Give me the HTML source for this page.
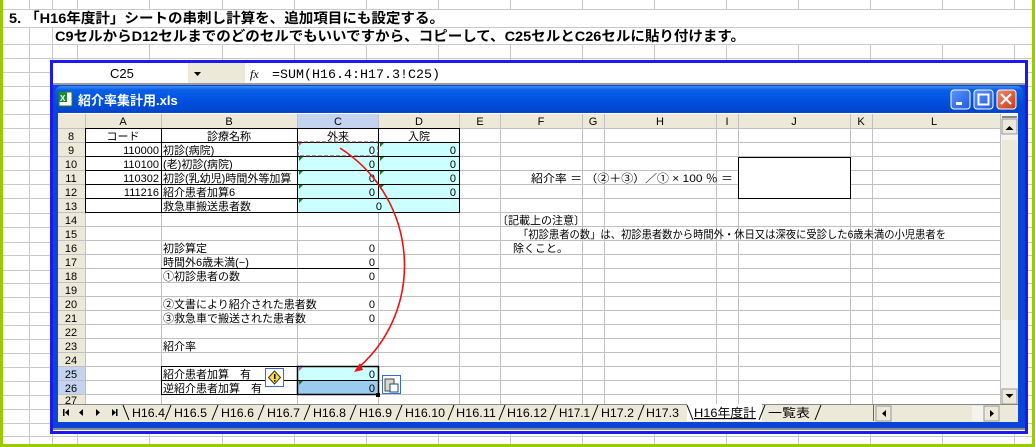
<!DOCTYPE html>
<html><head><meta charset="utf-8"><style>
html,body{margin:0;padding:0;background:#fff;}
svg{display:block;font-family:"Liberation Sans","Noto Sans CJK JP",sans-serif;}
</style></head><body>
<svg width="1035" height="447" viewBox="0 0 1035 447" xmlns="http://www.w3.org/2000/svg">
<rect width="1035" height="447" fill="#fff"/>
<g stroke="#c8c8c8" stroke-width="1">
<line x1="29.5" y1="0" x2="29.5" y2="447"/><line x1="52.5" y1="0" x2="52.5" y2="447"/><line x1="77.5" y1="0" x2="77.5" y2="447"/>
<line x1="149.5" y1="0" x2="149.5" y2="447"/><line x1="222.5" y1="0" x2="222.5" y2="447"/><line x1="294.5" y1="0" x2="294.5" y2="447"/>
<line x1="366.5" y1="0" x2="366.5" y2="447"/><line x1="438.5" y1="0" x2="438.5" y2="447"/><line x1="510.5" y1="0" x2="510.5" y2="447"/>
<line x1="582.5" y1="0" x2="582.5" y2="447"/><line x1="654.5" y1="0" x2="654.5" y2="447"/><line x1="726.5" y1="0" x2="726.5" y2="447"/>
<line x1="798.5" y1="0" x2="798.5" y2="447"/><line x1="870.5" y1="0" x2="870.5" y2="447"/><line x1="942.5" y1="0" x2="942.5" y2="447"/><line x1="1014.5" y1="0" x2="1014.5" y2="447"/>
<line x1="0" y1="9.5" x2="1035" y2="9.5"/><line x1="0" y1="27.5" x2="1035" y2="27.5"/><line x1="0" y1="44.5" x2="1035" y2="44.5"/>
<line x1="0" y1="58.5" x2="1035" y2="58.5"/><line x1="0" y1="72.5" x2="1035" y2="72.5"/><line x1="0" y1="86.5" x2="1035" y2="86.5"/>
<line x1="0" y1="100.5" x2="1035" y2="100.5"/><line x1="0" y1="114.5" x2="1035" y2="114.5"/><line x1="0" y1="128.5" x2="1035" y2="128.5"/>
<line x1="0" y1="142.5" x2="1035" y2="142.5"/><line x1="0" y1="156.5" x2="1035" y2="156.5"/><line x1="0" y1="170.5" x2="1035" y2="170.5"/>
<line x1="0" y1="184.5" x2="1035" y2="184.5"/><line x1="0" y1="198.5" x2="1035" y2="198.5"/><line x1="0" y1="213.5" x2="1035" y2="213.5"/>
<line x1="0" y1="227.5" x2="1035" y2="227.5"/><line x1="0" y1="242.5" x2="1035" y2="242.5"/><line x1="0" y1="255.5" x2="1035" y2="255.5"/>
<line x1="0" y1="270.5" x2="1035" y2="270.5"/><line x1="0" y1="283.5" x2="1035" y2="283.5"/><line x1="0" y1="297.5" x2="1035" y2="297.5"/>
<line x1="0" y1="312.5" x2="1035" y2="312.5"/><line x1="0" y1="325.5" x2="1035" y2="325.5"/><line x1="0" y1="339.5" x2="1035" y2="339.5"/>
<line x1="0" y1="353.5" x2="1035" y2="353.5"/><line x1="0" y1="367.5" x2="1035" y2="367.5"/><line x1="0" y1="381.5" x2="1035" y2="381.5"/>
<line x1="0" y1="395.5" x2="1035" y2="395.5"/><line x1="0" y1="409.5" x2="1035" y2="409.5"/><line x1="0" y1="423.5" x2="1035" y2="423.5"/>
<line x1="0" y1="436.5" x2="1035" y2="436.5"/>
</g>
<rect x="0" y="0" width="3" height="447" fill="#99cc00"/>
<rect x="1032" y="0" width="3" height="447" fill="#99cc00"/>
<rect x="0" y="444" width="1035" height="3" fill="#99cc00"/>
<rect x="4" y="10" width="1027" height="17" fill="#fff"/>
<rect x="53" y="28" width="978" height="16" fill="#fff"/>
<text x="9" y="23" font-size="14" font-weight="bold" textLength="435" lengthAdjust="spacingAndGlyphs">5. 「H16年度計」シートの串刺し計算を、追加項目にも設定する。</text>
<text x="55" y="41" font-size="14" font-weight="bold" textLength="690" lengthAdjust="spacingAndGlyphs">C9セルからD12セルまでのどのセルでもいいですから、コピーして、C25セルとC26セルに貼り付けます。</text>

<rect x="50" y="60" width="978" height="374" fill="#fff"/>
<rect x="51.5" y="61.5" width="975" height="371" fill="none" stroke="#1a1af0" stroke-width="3"/>
<rect x="53" y="63" width="972" height="21" fill="#fff"/>
<rect x="188" y="63" width="57" height="21" fill="#ece9d8"/>
<path d="M194 72 h7 l-3.5 4z" fill="#000"/>
<text x="110" y="78" font-size="13">C25</text>
<text x="250" y="78" font-size="12" font-style="italic" font-family="Liberation Serif,serif">fx</text>
<text x="272" y="78" font-size="13" font-family="Liberation Mono,monospace" textLength="168" lengthAdjust="spacingAndGlyphs">=SUM(H16.4:H17.3!C25)</text>
<rect x="53" y="83" width="972" height="2" fill="#9a9a9a"/>
<rect x="53" y="85" width="972" height="345" fill="#0a45d8"/>
<rect x="53" y="428" width="972" height="2" fill="#8a8a8a"/>
<defs>
<linearGradient id="tb" x1="0" y1="0" x2="0" y2="1">
<stop offset="0" stop-color="#3d8cf7"/><stop offset="0.15" stop-color="#0a5fe8"/><stop offset="0.6" stop-color="#0050e0"/><stop offset="1" stop-color="#0244c8"/></linearGradient>
<linearGradient id="btn" x1="0" y1="0" x2="1" y2="1"><stop offset="0" stop-color="#5a95ff"/><stop offset="1" stop-color="#2458d8"/></linearGradient>
<linearGradient id="cls" x1="0" y1="0" x2="1" y2="1"><stop offset="0" stop-color="#f08a6a"/><stop offset="1" stop-color="#c83a18"/></linearGradient>
</defs>
<rect x="55" y="86" width="968" height="26" rx="6" fill="url(#tb)"/>
<rect x="59" y="92" width="13" height="14" fill="#fff" stroke="#2a7a2a"/>
<rect x="59" y="92" width="8" height="10" fill="#1e8c2e"/>
<text x="60" y="101" font-size="8" fill="#fff" font-weight="bold">X</text>
<text x="78" y="105" font-size="13" font-weight="bold" fill="#fff">紹介率集計用.xls</text>
<rect x="951" y="90" width="19" height="19" rx="3" fill="url(#btn)" stroke="#fff"/>
<rect x="956" y="102" width="6" height="3" fill="#fff"/>
<rect x="974" y="90" width="19" height="19" rx="3" fill="url(#btn)" stroke="#fff"/>
<rect x="978.5" y="94.5" width="10" height="10" fill="none" stroke="#fff" stroke-width="2"/>
<rect x="997" y="90" width="19" height="19" rx="3" fill="url(#cls)" stroke="#fff"/>
<path d="M1001 94 l10 10 M1011 94 l-10 10" stroke="#fff" stroke-width="2.2"/>
<rect x="58" y="113" width="960" height="309" fill="#fff"/>
<rect x="58" y="114" width="943" height="15" fill="#ece9d8"/>
<rect x="58" y="114" width="27" height="290" fill="#ece9d8"/>
<rect x="298" y="114" width="80" height="15" fill="#c4d4f0"/>
<rect x="58" y="367" width="27" height="28" fill="#c4d4f0"/>
<g stroke="#c0c0c0">
<line x1="85.5" y1="114" x2="85.5" y2="404"/><line x1="161.5" y1="114" x2="161.5" y2="404"/><line x1="297.5" y1="114" x2="297.5" y2="404"/>
<line x1="378.5" y1="114" x2="378.5" y2="404"/><line x1="459.5" y1="114" x2="459.5" y2="404"/><line x1="500.5" y1="114" x2="500.5" y2="404"/>
<line x1="582.5" y1="114" x2="582.5" y2="404"/><line x1="604.5" y1="114" x2="604.5" y2="404"/><line x1="716.5" y1="114" x2="716.5" y2="404"/>
<line x1="738.5" y1="114" x2="738.5" y2="404"/><line x1="850.5" y1="114" x2="850.5" y2="404"/><line x1="872.5" y1="114" x2="872.5" y2="404"/>
<line x1="1000.5" y1="114" x2="1000.5" y2="404"/>
<line x1="58" y1="128.5" x2="1001" y2="128.5"/><line x1="58" y1="142.5" x2="1001" y2="142.5"/><line x1="58" y1="156.5" x2="1001" y2="156.5"/>
<line x1="58" y1="170.5" x2="1001" y2="170.5"/><line x1="58" y1="184.5" x2="1001" y2="184.5"/><line x1="58" y1="198.5" x2="1001" y2="198.5"/>
<line x1="58" y1="212.5" x2="1001" y2="212.5"/><line x1="58" y1="226.5" x2="1001" y2="226.5"/><line x1="58" y1="240.5" x2="1001" y2="240.5"/>
<line x1="58" y1="254.5" x2="1001" y2="254.5"/><line x1="58" y1="268.5" x2="1001" y2="268.5"/><line x1="58" y1="282.5" x2="1001" y2="282.5"/>
<line x1="58" y1="296.5" x2="1001" y2="296.5"/><line x1="58" y1="310.5" x2="1001" y2="310.5"/><line x1="58" y1="324.5" x2="1001" y2="324.5"/>
<line x1="58" y1="338.5" x2="1001" y2="338.5"/><line x1="58" y1="352.5" x2="1001" y2="352.5"/><line x1="58" y1="366.5" x2="1001" y2="366.5"/>
<line x1="58" y1="380.5" x2="1001" y2="380.5"/><line x1="58" y1="394.5" x2="1001" y2="394.5"/>
</g>
<rect x="298" y="143" width="161" height="70" fill="#ccffff"/>
<rect x="298" y="367" width="80" height="14" fill="#ccffff"/>
<rect x="298" y="381" width="80" height="14" fill="#99ccee"/>
<g stroke="#000" fill="none">
<rect x="85.5" y="128.5" width="374" height="84"/>
<line x1="85" y1="142.5" x2="460" y2="142.5"/><line x1="85" y1="156.5" x2="460" y2="156.5"/><line x1="85" y1="170.5" x2="460" y2="170.5"/>
<line x1="85" y1="184.5" x2="460" y2="184.5"/><line x1="85" y1="198.5" x2="460" y2="198.5"/>
<line x1="161.5" y1="128" x2="161.5" y2="213"/><line x1="297.5" y1="128" x2="297.5" y2="213"/><line x1="378.5" y1="128" x2="378.5" y2="199"/>
<line x1="161" y1="268.5" x2="379" y2="268.5"/>
<rect x="161.5" y="366.5" width="136" height="28"/><line x1="161" y1="380.5" x2="298" y2="380.5"/>
<rect x="297.5" y="366.5" width="81" height="28" stroke-width="1.5"/><line x1="298" y1="380.5" x2="378" y2="380.5"/>
</g>
<rect x="376" y="393" width="4" height="4" fill="#000"/>
<rect x="298" y="142" width="80" height="14" fill="none" stroke="#7a2a2a" stroke-dasharray="4,2"/>
<g fill="#1a7a1a"><path d="M299 157 h4 l-4 4z"/><path d="M299 171 h4 l-4 4z"/><path d="M299 185 h4 l-4 4z"/><path d="M299 199 h4 l-4 4z"/>
<path d="M380 143 h4 l-4 4z"/><path d="M380 157 h4 l-4 4z"/><path d="M380 171 h4 l-4 4z"/><path d="M380 185 h4 l-4 4z"/><path d="M299 381 h4 l-4 4z"/></g>
<path d="M299 367 h4 l-4 4z" fill="#cc44cc"/><path d="M299 143 h3 l-3 3z" fill="#cc44cc"/>
<g font-size="11" text-anchor="middle">
<text x="123" y="125">A</text><text x="229" y="125">B</text><text x="338" y="125">C</text><text x="419" y="125">D</text>
<text x="480" y="125">E</text><text x="541" y="125">F</text><text x="593" y="125">G</text><text x="660" y="125">H</text>
<text x="727" y="125">I</text><text x="794" y="125">J</text><text x="861" y="125">K</text><text x="934" y="125">L</text>
<text x="71" y="140">8</text><text x="71" y="154">9</text><text x="71" y="168">10</text><text x="71" y="182">11</text><text x="71" y="196">12</text>
<text x="71" y="210">13</text><text x="71" y="224">14</text><text x="71" y="238">15</text><text x="71" y="252">16</text><text x="71" y="266">17</text>
<text x="71" y="280">18</text><text x="71" y="294">19</text><text x="71" y="308">20</text><text x="71" y="322">21</text><text x="71" y="336">22</text>
<text x="71" y="350">23</text><text x="71" y="364">24</text><text x="71" y="378">25</text><text x="71" y="392">26</text><text x="71" y="404">27</text>
<text x="123" y="140">コード</text><text x="229" y="140">診療名称</text><text x="338" y="140">外来</text><text x="419" y="140">入院</text>
</g>
<g font-size="11">
<g text-anchor="end">
<text x="159" y="154">110000</text><text x="159" y="168">110100</text><text x="159" y="182">110302</text><text x="159" y="196">111216</text>
<text x="375" y="154">0</text><text x="375" y="168">0</text><text x="375" y="182">0</text><text x="375" y="196">0</text>
<text x="456" y="154">0</text><text x="456" y="168">0</text><text x="456" y="182">0</text><text x="456" y="196">0</text>
<text x="382" y="210">0</text>
<text x="375" y="252">0</text><text x="375" y="266">0</text><text x="375" y="280">0</text><text x="375" y="308">0</text><text x="375" y="322">0</text>
<text x="375" y="378">0</text><text x="375" y="392">0</text>
</g>
<text x="163" y="154">初診(病院)</text><text x="163" y="168">(老)初診(病院)</text><text x="163" y="182">初診(乳幼児)時間外等加算</text>
<text x="163" y="196">紹介患者加算6</text><text x="163" y="210">救急車搬送患者数</text>
<text x="163" y="252">初診算定</text><text x="163" y="266">時間外6歳未満(−)</text><text x="163" y="280">①初診患者の数</text>
<text x="163" y="308">②文書により紹介された患者数</text><text x="163" y="322">③救急車で搬送された患者数</text>
<text x="163" y="350">紹介率</text>
<text x="163" y="378">紹介患者加算　有</text><text x="163" y="392">逆紹介患者加算　有</text>
<text x="531" y="182" textLength="202" lengthAdjust="spacingAndGlyphs">紹介率 ＝ （②＋③）／① × 100 ％ ＝</text>
<text x="497" y="224">〔記載上の注意〕</text>
<text x="518" y="238" textLength="428" lengthAdjust="spacingAndGlyphs">「初診患者の数」は、初診患者数から時間外・休日又は深夜に受診した6歳未満の小児患者を</text>
<text x="513" y="252">除くこと。</text>
</g>
<rect x="738.5" y="157.5" width="112" height="41" fill="#fff" stroke="#000"/>
<rect x="265.5" y="368.5" width="18" height="18" fill="#fff" stroke="#3a6acc"/>
<path d="M274.5 371 l6 6.5 -6 6.5 -6 -6.5z" fill="#ffdd33" stroke="#333"/>
<rect x="274" y="374" width="1.5" height="5" fill="#000"/><rect x="274" y="380" width="1.5" height="1.5" fill="#000"/>
<rect x="382.5" y="375.5" width="18" height="18" fill="#fff" stroke="#3a6acc"/>
<rect x="385" y="379" width="9" height="12" fill="#d8d8c8" stroke="#444"/>
<rect x="390" y="384" width="8" height="8" fill="#fff" stroke="#224488"/>
<path d="M340 148 C 420 200, 425 310, 358 368" fill="none" stroke="#ee1111" stroke-width="1.6"/>
<path d="M354 372 l9 -2 -3 -7z" fill="#ee1111"/>
<rect x="1001" y="114" width="17" height="290" fill="#f4f3ee"/>
<rect x="1002" y="116" width="15" height="2" fill="#888"/>
<rect x="1002" y="119" width="15" height="15" fill="#ece9d8" stroke="#999"/>
<path d="M1005.5 130 h8 l-4 -4z" fill="#000"/>
<rect x="1002" y="140" width="15" height="180" fill="#ece9d8"/>
<rect x="1002" y="389" width="15" height="15" fill="#ece9d8" stroke="#999"/>
<path d="M1005.5 394 h8 l-4 4z" fill="#000"/>
<rect x="58" y="404" width="960" height="18" fill="#ece9d8"/>
<line x1="58" y1="404.5" x2="1018" y2="404.5" stroke="#888"/>
<g fill="#000">
<rect x="63" y="409" width="1.5" height="7"/><path d="M69 409 v7 l-4 -3.5z"/>
<path d="M83 409 v7 l-4 -3.5z"/><path d="M96 409 v7 l4 -3.5z"/>
<path d="M112 409 v7 l4 -3.5z"/><rect x="116" y="409" width="1.5" height="7"/>
</g>
<rect x="687" y="404" width="75" height="17" fill="#fff"/>
<g stroke="#000" stroke-width="1">
<line x1="123" y1="405" x2="129" y2="420"/>
<line x1="171" y1="405" x2="165" y2="420"/><line x1="218" y1="405" x2="212" y2="420"/><line x1="264" y1="405" x2="258" y2="420"/>
<line x1="310" y1="405" x2="304" y2="420"/><line x1="356" y1="405" x2="350" y2="420"/><line x1="402" y1="405" x2="396" y2="420"/>
<line x1="454" y1="405" x2="448" y2="420"/><line x1="505" y1="405" x2="499" y2="420"/><line x1="556" y1="405" x2="550" y2="420"/>
<line x1="598" y1="405" x2="592" y2="420"/><line x1="644" y1="405" x2="638" y2="420"/><line x1="687" y1="405" x2="693" y2="420"/>
<line x1="765" y1="405" x2="759" y2="420"/><line x1="821" y1="405" x2="815" y2="420"/>
</g>
<g font-size="12" lengthAdjust="spacingAndGlyphs">
<text x="132" y="417" textLength="33" lengthAdjust="spacingAndGlyphs">H16.4</text><text x="174" y="417" textLength="33" lengthAdjust="spacingAndGlyphs">H16.5</text>
<text x="221" y="417" textLength="33" lengthAdjust="spacingAndGlyphs">H16.6</text><text x="267" y="417" textLength="33" lengthAdjust="spacingAndGlyphs">H16.7</text>
<text x="313" y="417" textLength="33" lengthAdjust="spacingAndGlyphs">H16.8</text><text x="359" y="417" textLength="33" lengthAdjust="spacingAndGlyphs">H16.9</text>
<text x="405" y="417" textLength="40" lengthAdjust="spacingAndGlyphs">H16.10</text>
<text x="456" y="417" textLength="40" lengthAdjust="spacingAndGlyphs">H16.11</text><text x="507" y="417" textLength="40" lengthAdjust="spacingAndGlyphs">H16.12</text>
<text x="559" y="417" textLength="31" lengthAdjust="spacingAndGlyphs">H17.1</text><text x="601" y="417" textLength="33" lengthAdjust="spacingAndGlyphs">H17.2</text>
<text x="646" y="417" textLength="33" lengthAdjust="spacingAndGlyphs">H17.3</text>
<text x="694" y="417" text-decoration="underline" textLength="62" lengthAdjust="spacingAndGlyphs">H16年度計</text><text x="768" y="417" textLength="42" lengthAdjust="spacingAndGlyphs">一覧表</text>
</g>
<line x1="873.5" y1="405" x2="873.5" y2="421" stroke="#666"/>
<rect x="876" y="406" width="15" height="15" fill="#ece9d8" stroke="#999"/>
<path d="M886 410 v7 l-4 -3.5z" fill="#000"/>
<rect x="892" y="406" width="80" height="15" fill="#ece9d8"/>
<rect x="972" y="406" width="12" height="15" fill="#f4f3ee"/>
<rect x="984" y="406" width="15" height="15" fill="#ece9d8" stroke="#999"/>
<path d="M990 410 v7 l4 -3.5z" fill="#000"/>
</svg>
</body></html>
